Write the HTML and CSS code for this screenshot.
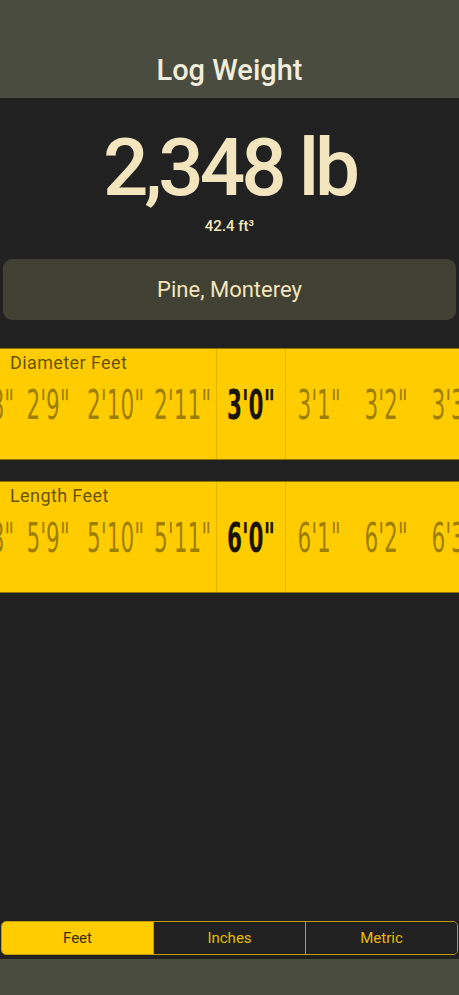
FILE: index.html
```html
<!DOCTYPE html>
<html>
<head>
<meta charset="utf-8">
<link rel="stylesheet" href="styles.css">
</head>
<body>
<div class="app">
  <header class="topbar"><h1 class="title">Log Weight</h1></header>
  <section class="result">
    <div class="weight">2,348 lb</div>
    <div class="volume">42.4 ft³</div>
  </section>
  <div class="species-wrap"><button class="species">Pine, Monterey</button></div>

  <div class="ruler ruler-first">
    <div class="ruler-label">Diameter Feet</div>
    <div class="ruler-row">
      <div class="tick tick-edge"><span class="val">2'8"</span></div>
      <div class="tick"><span class="val">2'9"</span></div>
      <div class="tick"><span class="val">2'10"</span></div>
      <div class="tick"><span class="val">2'11"</span></div>
      <div class="tick tick-sel"><span class="val">3'0"</span></div>
      <div class="tick"><span class="val">3'1"</span></div>
      <div class="tick"><span class="val">3'2"</span></div>
      <div class="tick"><span class="val">3'3"</span></div>
    </div>
  </div>

  <div class="ruler ruler-second">
    <div class="ruler-label">Length Feet</div>
    <div class="ruler-row">
      <div class="tick tick-edge"><span class="val">5'8"</span></div>
      <div class="tick"><span class="val">5'9"</span></div>
      <div class="tick"><span class="val">5'10"</span></div>
      <div class="tick"><span class="val">5'11"</span></div>
      <div class="tick tick-sel"><span class="val">6'0"</span></div>
      <div class="tick"><span class="val">6'1"</span></div>
      <div class="tick"><span class="val">6'2"</span></div>
      <div class="tick"><span class="val">6'3"</span></div>
    </div>
  </div>

  <div class="spacer"></div>

  <nav class="segmented">
    <div class="seg seg-active">Feet</div>
    <div class="seg">Inches</div>
    <div class="seg">Metric</div>
  </nav>
  <footer class="bottombar"></footer>
</div>
</body>
</html>
```

FILE: styles.css
```css
* { box-sizing: border-box; }
html, body { margin: 0; padding: 0; }
body {
  background: #212121;
  font-family: Roboto, "Liberation Sans", sans-serif;
  width: 459px;
  height: 995px;
  overflow: hidden;
}
.app {
  display: flex;
  flex-direction: column;
  height: 995px;
}
.topbar {
  height: 98px;
  background: #4a4c3f;
  display: flex;
  align-items: flex-end;
  justify-content: center;
  padding-bottom: 10px;
}
.title {
  margin: 0;
  font-size: 29px;
  line-height: 36px;
  font-weight: 500;
  color: #f1ecdc;
}
.result {
  display: flex;
  flex-direction: column;
  align-items: center;
  margin-top: 30px;
}
.weight {
  font-size: 80px;
  line-height: 80px;
  font-weight: 500;
  color: #f3e5bd;
  letter-spacing: -4px;
}
.volume {
  margin-top: 9px;
  font-size: 15px;
  line-height: 18px;
  font-weight: 500;
  color: #f3e5bd;
}
.species-wrap {
  padding: 0 3px;
  margin-top: 24px;
}
.species {
  width: 100%;
  height: 61px;
  border: none;
  border-radius: 9px;
  background: #404133;
  color: #f3e5bd;
  font-family: Roboto, "Liberation Sans", sans-serif;
  font-size: 22px;
  font-weight: 400;
}
.ruler {
  position: relative;
  height: 112px;
  background: #ffcc00;
  border-top: 1px solid #8a7200;
  border-bottom: 1px solid #8a7200;
  overflow: hidden;
}
.ruler-first { margin-top: 28px; }
.ruler-second { margin-top: 21px; }
.ruler-label {
  position: absolute;
  left: 10px;
  top: 3px;
  font-size: 18px;
  line-height: 22px;
  letter-spacing: 0.4px;
  color: rgba(0, 0, 0, 0.62);
}
.ruler-row {
  display: flex;
  height: 100%;
  margin-left: -40px;
}
.tick {
  flex: 0 0 67px;
  width: 67px;
  min-width: 0;
  display: flex;
  align-items: center;
  justify-content: center;
  height: 100%;
}
.tick-edge {
  flex: 0 0 55px;
  width: 55px;
  justify-content: flex-end;
}
.tick-sel {
  flex: 0 0 70px;
  width: 70px;
  border-left: 1px solid #e2b500;
  border-right: 1px solid #e2b500;
}
.val {
  display: inline-block;
  flex: none;
  font-family: "DejaVu Sans Condensed", "DejaVu Sans", sans-serif;
  font-size: 40px;
  line-height: 40px;
  color: rgba(0, 0, 0, 0.4);
  transform: scaleX(0.6);
  white-space: nowrap;
  padding-top: 2px;
}
.tick-edge .val {
  transform-origin: right center;
  margin-right: 1px;
}
.tick-sel .val {
  color: #1a1500;
  font-weight: bold;
}
.spacer { flex: 1; }
.segmented {
  display: flex;
  margin: 0 1px;
  height: 34px;
  border: 1px solid #c09c00;
  border-radius: 5px;
  overflow: hidden;
}
.seg {
  flex: 1;
  display: flex;
  align-items: center;
  justify-content: center;
  font-size: 15px;
  color: #e8ba00;
  background: #212121;
  border-left: 1px solid #c09c00;
}
.seg:first-child { border-left: none; }
.seg-active {
  background: #ffcc00;
  color: #3b3000;
}
.bottombar {
  margin-top: 4px;
  height: 36px;
  background: #4a4c3f;
}
```
